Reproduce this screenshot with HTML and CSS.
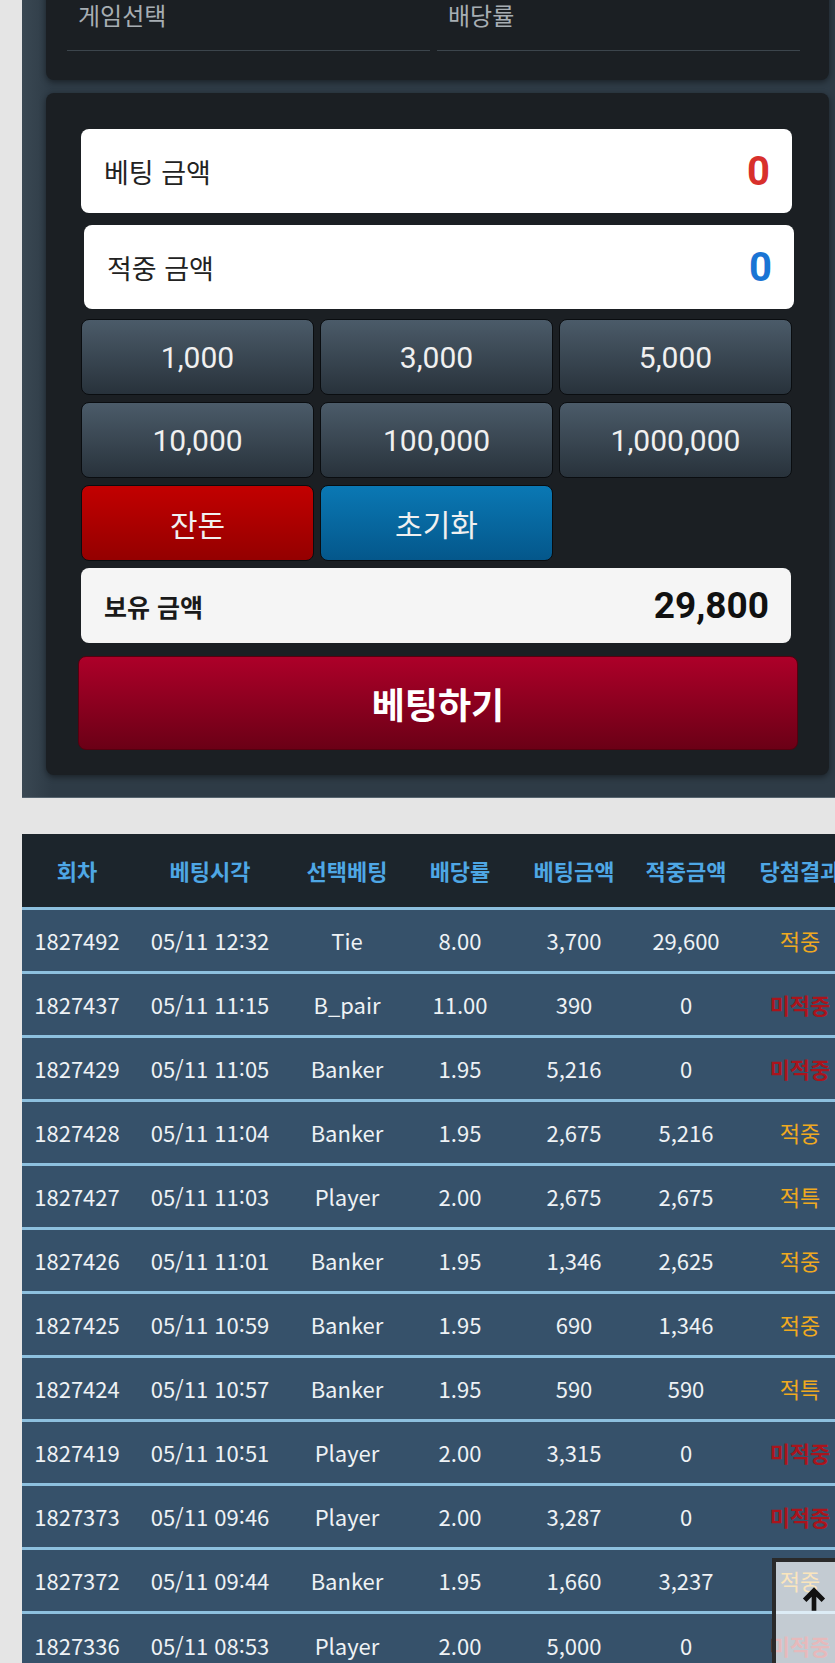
FILE: index.html
```html
<!DOCTYPE html>
<html lang="ko">
<head>
  <meta charset="UTF-8" />
  <meta name="viewport" content="width=device-width, initial-scale=1.0" />
  <title>베팅</title>
  <link rel="stylesheet" href="styles.css">
</head>
<body>

<div class="wrap">
  <div class="card select-card">
    <div class="field"><label>게임선택</label></div>
    <div class="field"><label>배당률</label></div>
  </div>

  <div class="card bet-card">
    <div class="amount"><span>베팅 금액</span><b class="red">0</b></div>
    <div class="amount shift"><span>적중 금액</span><b class="blue">0</b></div>
    <div class="chips">
      <button>1,000</button>
      <button>3,000</button>
      <button>5,000</button>
      <button>10,000</button>
      <button>100,000</button>
      <button>1,000,000</button>
      <button class="change">잔돈</button>
      <button class="reset">초기화</button>
    </div>
    <div class="amount hold"><span>보유 금액</span><b>29,800</b></div>
    <button class="bet-btn">베팅하기</button>
  </div>
</div>

<table class="history">
  <colgroup>
    <col style="width:110px"><col style="width:156px"><col style="width:118px"><col style="width:108px">
    <col style="width:120px"><col style="width:104px"><col style="width:124px">
  </colgroup>
  <thead>
    <tr><th>회차</th><th>베팅시각</th><th>선택베팅</th><th>배당률</th><th>베팅금액</th><th>적중금액</th><th>당첨결과</th></tr>
  </thead>
  <tbody>
    <tr><td>1827492</td><td>05/11 12:32</td><td>Tie</td><td>8.00</td><td>3,700</td><td>29,600</td><td class="win">적중</td></tr>
    <tr><td>1827437</td><td>05/11 11:15</td><td>B_pair</td><td>11.00</td><td>390</td><td>0</td><td class="lose">미적중</td></tr>
    <tr><td>1827429</td><td>05/11 11:05</td><td>Banker</td><td>1.95</td><td>5,216</td><td>0</td><td class="lose">미적중</td></tr>
    <tr><td>1827428</td><td>05/11 11:04</td><td>Banker</td><td>1.95</td><td>2,675</td><td>5,216</td><td class="win">적중</td></tr>
    <tr><td>1827427</td><td>05/11 11:03</td><td>Player</td><td>2.00</td><td>2,675</td><td>2,675</td><td class="win">적특</td></tr>
    <tr><td>1827426</td><td>05/11 11:01</td><td>Banker</td><td>1.95</td><td>1,346</td><td>2,625</td><td class="win">적중</td></tr>
    <tr><td>1827425</td><td>05/11 10:59</td><td>Banker</td><td>1.95</td><td>690</td><td>1,346</td><td class="win">적중</td></tr>
    <tr><td>1827424</td><td>05/11 10:57</td><td>Banker</td><td>1.95</td><td>590</td><td>590</td><td class="win">적특</td></tr>
    <tr><td>1827419</td><td>05/11 10:51</td><td>Player</td><td>2.00</td><td>3,315</td><td>0</td><td class="lose">미적중</td></tr>
    <tr><td>1827373</td><td>05/11 09:46</td><td>Player</td><td>2.00</td><td>3,287</td><td>0</td><td class="lose">미적중</td></tr>
    <tr><td>1827372</td><td>05/11 09:44</td><td>Banker</td><td>1.95</td><td>1,660</td><td>3,237</td><td class="win">적중</td></tr>
    <tr><td>1827336</td><td>05/11 08:53</td><td>Player</td><td>2.00</td><td>5,000</td><td>0</td><td class="lose">미적중</td></tr>
  </tbody>
</table>

<button class="to-top" aria-label="맨 위로">
  <svg width="28" height="28" viewBox="0 0 24 24"><path d="M12 2 L2.5 11.5 L5.5 14.5 L10 10 V22 H14 V10 L18.5 14.5 L21.5 11.5 Z" fill="#111"/></svg>
</button>

</body>
</html>
```

FILE: styles.css
```css
* { box-sizing: border-box; }

html, body {
  height: 100%;
  overflow: hidden;
}

body {
  margin: 0;
  background: #e5e5e5;
  font-family: Roboto, "Noto Sans CJK KR", sans-serif;
}

.wrap {
  margin: -50px 0 0 22px;
  padding: 0 6px 22px 24px;
  background: linear-gradient(to right, #3a4853, #2e3b46 30px);
  border-bottom: 1px solid #56646f;
}

.card {
  background: #1b1f23;
  border-radius: 8px;
  box-shadow: 0 2px 6px rgba(0,0,0,0.45);
}

.select-card {
  display: flex;
  gap: 7px;
  padding: 50px 29px 29px 21px;
}

.field {
  flex: 1;
  padding: 0 0 20px 11px;
  border-bottom: 1px solid #3c454c;
}

.field label {
  display: block;
  font-family: "Noto Sans CJK KR", sans-serif;
  font-size: 24px;
  line-height: 30px;
  color: #a7aeb3;
}

.bet-card {
  margin-top: 13px;
  padding: 36px 37px 25px 35px;
}

.amount {
  display: flex;
  justify-content: space-between;
  align-items: center;
  height: 84px;
  padding: 0 22px 0 23px;
  background: #fff;
  border-radius: 8px;
}

.amount span {
  font-family: "Noto Sans CJK KR", sans-serif;
  font-size: 27px;
  color: #222;
}

.amount b {
  font-size: 40px;
  font-weight: 700;
  color: #111;
}

.amount .red { color: #d8302c; }
.amount .blue { color: #1a74d4; }

.amount.shift { margin: 12px -2px 0 3px; }

.chips {
  display: grid;
  grid-template-columns: repeat(3, 1fr);
  gap: 7px 6px;
  margin-top: 10px;
}

.chips button {
  height: 76px;
  border: 1px solid #0a0d10;
  border-radius: 8px;
  background: linear-gradient(#4b5b69, #28323b);
  color: #f0f0f0;
  font-family: Roboto, "Noto Sans CJK KR", sans-serif;
  font-size: 30px;
}

.chips .change { background: linear-gradient(#c20000, #940000); }
.chips .reset { background: linear-gradient(#0a78b4, #04578b); }

.amount.hold {
  height: 75px;
  margin: 7px 1px 0 0;
  background: #f5f5f5;
}

.hold span {
  font-size: 25px;
  font-weight: 700;
  color: #1a1a1a;
}

.hold b { font-size: 37px; }

.bet-btn {
  display: block;
  width: calc(100% + 9px);
  height: 94px;
  margin: 13px -6px 0 -3px;
  border: 1px solid #55000f;
  border-radius: 8px;
  background: linear-gradient(#ad0029, #6b0016);
  color: #fff;
  font-family: "Noto Sans CJK KR", sans-serif;
  font-size: 36px;
  font-weight: 700;
}

.history {
  margin: 36px 0 0 22px;
  width: 840px;
  table-layout: fixed;
  border-collapse: collapse;
  font-family: "Noto Sans CJK KR", sans-serif;
}

.history th {
  height: 74px;
  padding: 0;
  background: #1c252c;
  color: #4ea7e5;
  font-size: 22px;
  font-weight: 700;
}

.history td {
  height: 64px;
  padding: 0;
  border-top: 3px solid #8dc0df;
  background: #36516a;
  color: #eef2f5;
  font-size: 22px;
  text-align: center;
}

.history td.win { color: #efa91f; }
.history td.lose { color: #aa141c; font-weight: 700; }

.to-top {
  position: fixed;
  right: -17px;
  bottom: -15px;
  display: flex;
  align-items: flex-start;
  width: 80px;
  height: 120px;
  padding: 23px 0 0 24px;
  border: 4px solid #2a2a2a;
  background: rgba(255,255,255,0.7);
}

.to-top svg { display: block; }
```
